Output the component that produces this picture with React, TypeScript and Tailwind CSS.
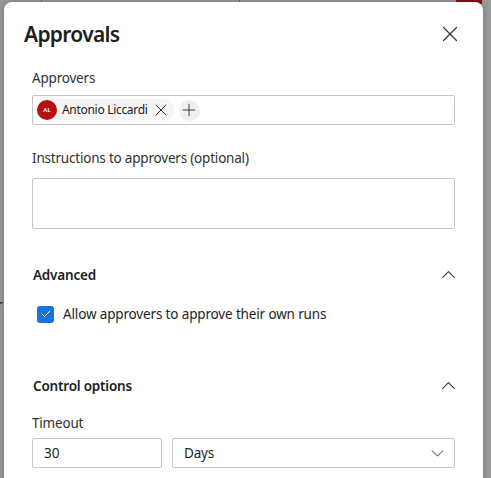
import { X, Plus, ChevronUp, ChevronDown, Check } from 'lucide-react';

const font = { fontFamily: '"Noto Sans", "Open Sans", sans-serif' };

// Section header with collapse chevron
function SectionHeader({ title }: { title: string }) {
  return (
    <div className="flex items-center justify-between h-5">
      <h2 className="text-[13.5px] font-semibold text-[#201f1e] leading-5 pl-[1px] tracking-[-0.2px]">{title}</h2>
      <ChevronUp className="w-[23px] h-[23px] -mr-[5px] -mt-[2px] text-[#323130]" strokeWidth={1.1} />
    </div>
  );
}

export default function App() {
  return (
    <div className="relative h-screen w-full overflow-hidden bg-[#9c9c9c]" style={font}>
      {/* dimmed page behind */}
      <div className="absolute top-0 left-[41px] w-px h-[3px] bg-[#6a6a6a]" />
      <div className="absolute top-0 left-[239px] w-px h-[3px] bg-[#6a6a6a]" />
      <div className="absolute top-0 left-[456px] w-[26px] h-[4px] bg-[#8a1010]" />
      <span className="absolute left-[-3px] top-[294px] text-[14px] text-[#222]">r</span>

      {/* Dialog */}
      <div className="relative ml-[4px] mt-[2px] w-[479px] h-[500px] bg-white rounded-t-lg shadow-[0_0_8px_rgba(0,0,0,0.25)]">
        <div className="flex items-center justify-between pt-[18px] pl-[20px] pr-[20px]">
          <h1 className="text-[21px] font-semibold leading-7 text-[#201f1e] tracking-[-0.7px]">Approvals</h1>
          <X className="w-[26px] h-[26px] text-[#323130]" strokeWidth={1.1} />
        </div>

        <div className="pl-[28px] pr-[28px] text-[#323130]">
          {/* Approvers */}
          <label className="block mt-[20px] text-[13.5px] leading-5 tracking-[-0.2px]">Approvers</label>
          <div className="mt-[7px] h-[30px] border border-[#c8c6c4] rounded-[2px] flex items-center pl-[4px] gap-[5px]">
            <div className="flex items-center h-[22px] rounded-full bg-[#f6f5f4] pr-[3px]">
              <div className="w-[20px] h-[20px] rounded-full bg-[#b3120f] flex items-center justify-center text-[6px] text-white font-semibold">
                AL
              </div>
              <span className="ml-[5px] text-[12px] leading-5 text-[#201f1e] tracking-[-0.3px]">Antonio Liccardi</span>
              <X className="ml-[3px] w-[20px] h-[20px] text-[#323130]" strokeWidth={1.2} />
            </div>
            <div className="w-[21px] h-[21px] rounded-full bg-[#f0efee] flex items-center justify-center">
              <Plus className="w-[20px] h-[20px] text-[#323130]" strokeWidth={1.1} />
            </div>
          </div>

          {/* Instructions */}
          <label className="block mt-[23px] text-[13.5px] leading-5 tracking-[-0.2px]">Instructions to approvers (optional)</label>
          <div className="mt-[10px] h-[51px] border border-[#c8c6c4] rounded-[2px]" />

          {/* Advanced */}
          <div className="mt-[36px]">
            <SectionHeader title="Advanced" />
          </div>
          <div className="mt-[19px] flex items-center h-5 pl-[5px]">
            <div className="w-[17px] h-[17px] rounded-[3px] bg-[#1a73d9] flex items-center justify-center">
              <Check className="w-[12px] h-[12px] text-white" strokeWidth={2} />
            </div>
            <span className="ml-[9px] text-[13.5px] leading-5 text-[#201f1e] tracking-[-0.15px]">Allow approvers to approve their own runs</span>
          </div>

          {/* Control options */}
          <div className="mt-[52px]">
            <SectionHeader title="Control options" />
          </div>
          <label className="block mt-[17px] text-[13.5px] leading-5 tracking-[-0.2px]">Timeout</label>
          <div className="mt-[5px] flex gap-[10px]">
            <div className="w-[130px] h-[30px] border border-[#c8c6c4] rounded-[2px] flex items-center pl-[11px] text-[13.5px] text-[#201f1e]">
              30
            </div>
            <div className="flex-1 h-[30px] border border-[#c8c6c4] rounded-[2px] flex items-center justify-between pl-[11px] pr-[6px] text-[13.5px] text-[#201f1e] tracking-[-0.2px]">
              <span>Days</span>
              <ChevronDown className="w-[21px] h-[21px] text-[#323130]" strokeWidth={1.1} />
            </div>
          </div>
        </div>
      </div>
    </div>
  );
}
